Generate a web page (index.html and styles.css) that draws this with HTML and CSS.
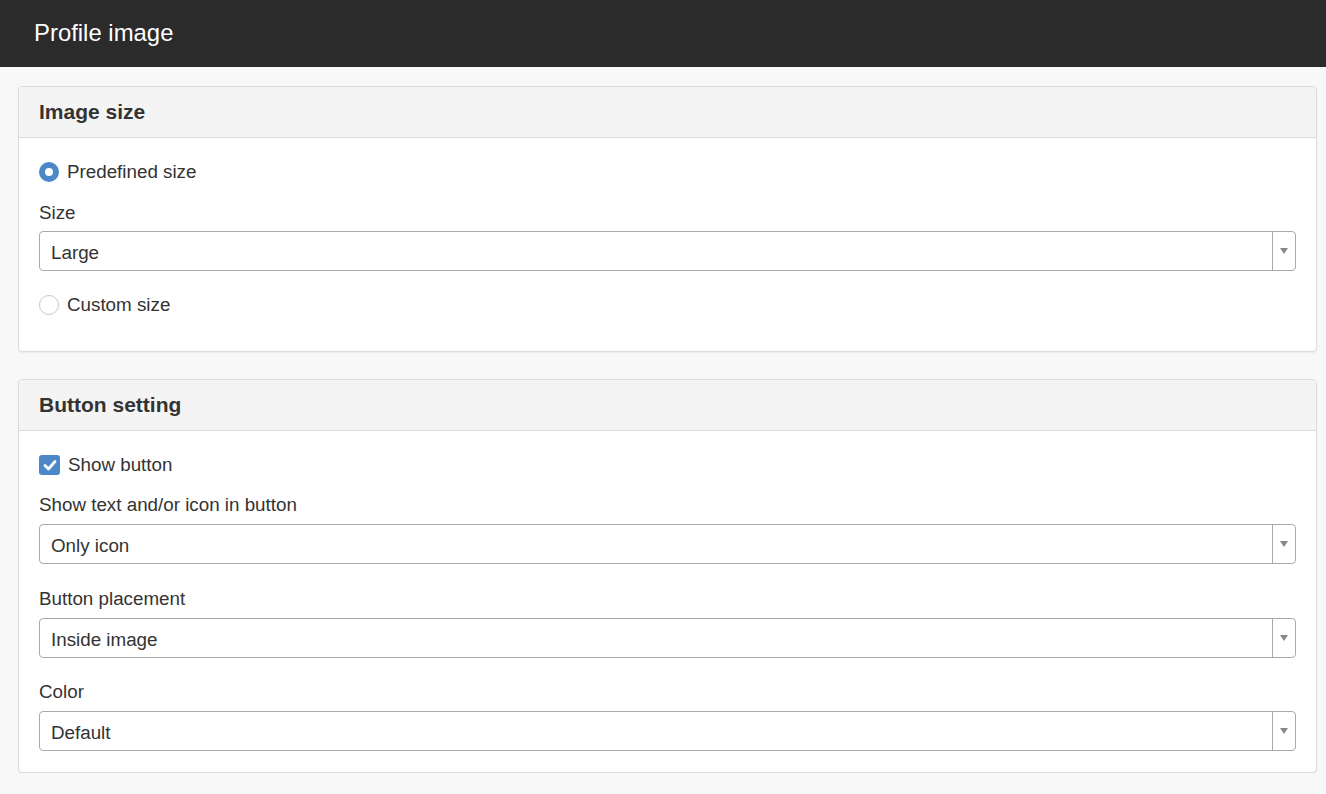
FILE: index.html
```html
<!DOCTYPE html>
<html lang="en">
<head>
<meta charset="utf-8">
<title>Profile image</title>
<link rel="stylesheet" href="styles.css">
</head>
<body>
<header class="topbar">
  <h1 class="topbar-title">Profile image</h1>
</header>
<main class="content">
  <section class="panel">
    <div class="panel-heading"><h2>Image size</h2></div>
    <div class="panel-body">
      <label class="choice first">
        <span class="radio checked"></span>
        <span>Predefined size</span>
      </label>
      <div class="field">
        <div class="field-label">Size</div>
        <div class="select">
          <span class="select-value">Large</span>
          <span class="select-toggle"><span class="caret"></span></span>
        </div>
      </div>
      <label class="choice">
        <span class="radio"></span>
        <span>Custom size</span>
      </label>
    </div>
  </section>

  <section class="panel">
    <div class="panel-heading"><h2>Button setting</h2></div>
    <div class="panel-body">
      <label class="choice first">
        <span class="checkbox">
          <svg viewBox="0 0 20 20" width="20" height="20"><path d="M5 10.5 L8.5 14 L15 6.5" fill="none" stroke="#fff" stroke-width="2.8" stroke-linecap="round" stroke-linejoin="round"/></svg>
        </span>
        <span>Show button</span>
      </label>
      <div class="field tight">
        <div class="field-label">Show text and/or icon in button</div>
        <div class="select">
          <span class="select-value">Only icon</span>
          <span class="select-toggle"><span class="caret"></span></span>
        </div>
      </div>
      <div class="field">
        <div class="field-label">Button placement</div>
        <div class="select">
          <span class="select-value">Inside image</span>
          <span class="select-toggle"><span class="caret"></span></span>
        </div>
      </div>
      <div class="field last">
        <div class="field-label">Color</div>
        <div class="select">
          <span class="select-value">Default</span>
          <span class="select-toggle"><span class="caret"></span></span>
        </div>
      </div>
    </div>
  </section>
</main>
</body>
</html>
```

FILE: styles.css
```css
* { box-sizing: border-box; }

html, body {
  margin: 0;
  padding: 0;
}

body {
  background: #f8f8f8;
  font-family: "Liberation Sans", Arial, Helvetica, sans-serif;
  color: #333;
  font-size: 18.8px;
}

.topbar {
  background: #2b2b2b;
  height: 67px;
  display: flex;
  align-items: center;
  padding-left: 34px;
}

.topbar-title {
  margin: 0;
  color: #fff;
  font-weight: normal;
  font-size: 23.9px;
  line-height: 1;
  padding-bottom: 1px;
}

.content {
  padding: 19px 9px 0 18px;
  display: flex;
  flex-direction: column;
  gap: 27px;
}

.panel {
  background: #fff;
  border: 1px solid #dcdcdc;
  border-radius: 4px;
  box-shadow: 0 1px 2px rgba(0, 0, 0, 0.06);
}

.panel-heading {
  background: #f4f4f4;
  border-bottom: 1px solid #dcdcdc;
  border-radius: 4px 4px 0 0;
  height: 51px;
  display: flex;
  align-items: center;
  padding-left: 20px;
}

.panel-heading h2 {
  margin: 0;
  font-size: 21px;
  font-weight: bold;
  color: #333;
  line-height: 1;
  padding-bottom: 2px;
}

.panel-body {
  padding: 20px 20px 21px 20px;
}

.panel:first-child .panel-body {
  padding-bottom: 34px;
}

.choice {
  display: flex;
  align-items: center;
  gap: 8px;
  height: 26px;
  line-height: 26px;
  margin-top: 20px;
}

.choice span:last-child {
  padding-top: 2px;
}

.choice.first {
  margin-top: 0;
}

.radio {
  width: 20px;
  height: 20px;
  border-radius: 50%;
  border: 1px solid #c8c8c8;
  background: #fff;
  flex: none;
  position: relative;
  top: 1px;
}

.radio.checked {
  border: none;
  background: #4c87c7;
}

.radio.checked::after {
  content: "";
  position: absolute;
  left: 6px;
  top: 6px;
  width: 8px;
  height: 8px;
  border-radius: 50%;
  background: #fff;
}

.checkbox {
  width: 21px;
  height: 20px;
  border-radius: 3px;
  background: #4c87c7;
  flex: none;
  display: flex;
  align-items: center;
  justify-content: center;
  position: relative;
  top: 1px;
}

.checkbox svg { display: block; }

.field {
  margin-top: 15px;
}

.field-label {
  height: 26px;
  line-height: 26px;
  padding-top: 1px;
  margin-bottom: 6px;
}

.panel:last-child .field {
  margin-top: 21px;
}

.panel:last-child .field.tight {
  margin-top: 14px;
}

.panel:last-child .field.last {
  margin-top: 20px;
}

.panel:last-child .field-label {
  margin-bottom: 7px;
}

.select {
  height: 40px;
  border: 1px solid #a9a9a9;
  border-radius: 4px;
  background: #fff;
  display: flex;
  align-items: stretch;
}

.select-value {
  flex: 1;
  padding-left: 11px;
  padding-top: 3px;
  display: flex;
  align-items: center;
  color: #333;
}

.select-toggle {
  width: 23px;
  border-left: 1px solid #a9a9a9;
  display: flex;
  align-items: center;
  justify-content: center;
}

.caret {
  width: 0;
  height: 0;
  border-left: 4px solid transparent;
  border-right: 4px solid transparent;
  border-top: 6px solid #888;
}
```
